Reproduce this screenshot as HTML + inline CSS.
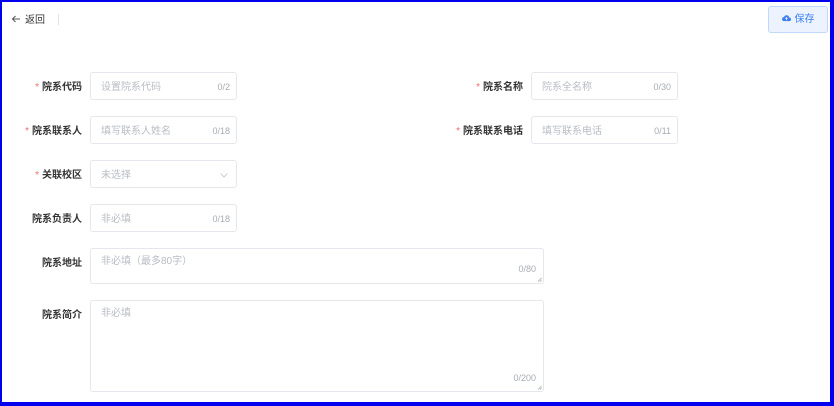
<!DOCTYPE html>
<html><head><meta charset="utf-8"><style>
*{margin:0;padding:0;box-sizing:border-box}
body{width:834px;height:406px;overflow:hidden;background:#fff;font-family:"Liberation Sans","Noto Sans CJK SC",sans-serif;position:relative}
.frame{position:absolute;left:0;top:0;width:834px;height:406px;border-left:2px solid #0000ee;border-top:2px solid #0000ee;border-right:4px solid #0000ee;border-bottom:4px solid #0000ee;pointer-events:none}
.a{position:absolute;line-height:12px}
.lbl{position:absolute;font-size:10px;line-height:12px;font-weight:bold;color:#333;text-align:right;white-space:nowrap}
.lbl b{color:#f56c6c;font-weight:normal;margin-right:3px}
.in{position:absolute;border:1px solid #e4e7ed;border-radius:3px;background:#fff}
.ph{position:absolute;left:10px;font-size:10px;line-height:12px;color:#b8bcc4;white-space:nowrap}
.cnt{position:absolute;right:6px;font-size:9px;line-height:12px;color:#a8abb2}
</style></head><body>
<div class="a" style="left:11px;top:14px;font-size:10px;color:#333;white-space:nowrap">
<svg width="10" height="10" viewBox="0 0 10 10" style="vertical-align:-1px;margin-right:4px"><path d="M9 5H1.5M4.5 2L1.5 5l3 3" stroke="#555" stroke-width="1" fill="none"/></svg>返回</div>
<div class="a" style="left:58px;top:14px;width:1px;height:11px;background:#e4e4e4"></div>
<div class="a" style="left:768px;top:6px;width:60px;height:27px;background:#ecf3fe;border:1px solid #bfd8fb;border-radius:3px;font-size:10px;color:#3b7ff0;text-align:center;line-height:25px">
<svg width="9" height="8" viewBox="0 0 10 8" style="vertical-align:0px;margin-right:4px"><path d="M2.5 7.5h5.5a2 2 0 0 0 0-4 3 3 0 0 0-5.8-.5A2.2 2.2 0 0 0 2.5 7.5z" fill="#3b7ff0"/><path d="M5 6.5V3.5M3.8 4.7L5 3.5l1.2 1.2" stroke="#fff" stroke-width=".8" fill="none"/></svg>保存</div>

<div class="lbl" style="right:752px;top:82px"><b>*</b>院系代码</div>
<div class="in" style="left:90px;top:72px;width:147px;height:28px"><span class="ph" style="top:9px">设置院系代码</span><span class="cnt" style="top:8px">0/2</span></div>
<div class="lbl" style="right:311px;top:82px"><b>*</b>院系名称</div>
<div class="in" style="left:531px;top:72px;width:147px;height:28px"><span class="ph" style="top:9px">院系全名称</span><span class="cnt" style="top:8px">0/30</span></div>

<div class="lbl" style="right:752px;top:126px"><b>*</b>院系联系人</div>
<div class="in" style="left:90px;top:116px;width:147px;height:28px"><span class="ph" style="top:9px">填写联系人姓名</span><span class="cnt" style="top:8px">0/18</span></div>
<div class="lbl" style="right:311px;top:126px"><b>*</b>院系联系电话</div>
<div class="in" style="left:531px;top:116px;width:147px;height:28px"><span class="ph" style="top:9px">填写联系电话</span><span class="cnt" style="top:8px">0/11</span></div>

<div class="lbl" style="right:752px;top:170px"><b>*</b>关联校区</div>
<div class="in" style="left:90px;top:160px;width:147px;height:28px"><span class="ph" style="top:9px">未选择</span>
<svg class="a" style="right:8px;top:12px" width="8" height="5" viewBox="0 0 8 5"><path d="M.5.5L4 4 7.5.5" stroke="#c0c4cc" stroke-width=".8" fill="none"/></svg></div>

<div class="lbl" style="right:752px;top:214px">院系负责人</div>
<div class="in" style="left:90px;top:204px;width:147px;height:28px"><span class="ph" style="top:9px">非必填</span><span class="cnt" style="top:8px">0/18</span></div>

<div class="lbl" style="right:752px;top:258px">院系地址</div>
<div class="in" style="left:90px;top:248px;width:454px;height:36px"><span class="ph" style="top:7px">非必填（最多80字）</span><span class="cnt" style="top:14px;right:7px">0/80</span>
<svg class="a" style="right:1px;bottom:1px" width="5" height="5" viewBox="0 0 5 5"><path d="M1 4.5L4.5 1M3 4.5L4.5 3" stroke="#999" stroke-width=".6"/></svg></div>

<div class="lbl" style="right:752px;top:310px">院系简介</div>
<div class="in" style="left:90px;top:300px;width:454px;height:92px"><span class="ph" style="top:7px">非必填</span><span class="cnt" style="top:71px;right:7px">0/200</span>
<svg class="a" style="right:1px;bottom:1px" width="5" height="5" viewBox="0 0 5 5"><path d="M1 4.5L4.5 1M3 4.5L4.5 3" stroke="#999" stroke-width=".6"/></svg></div>

<div class="frame"></div>
</body></html>
